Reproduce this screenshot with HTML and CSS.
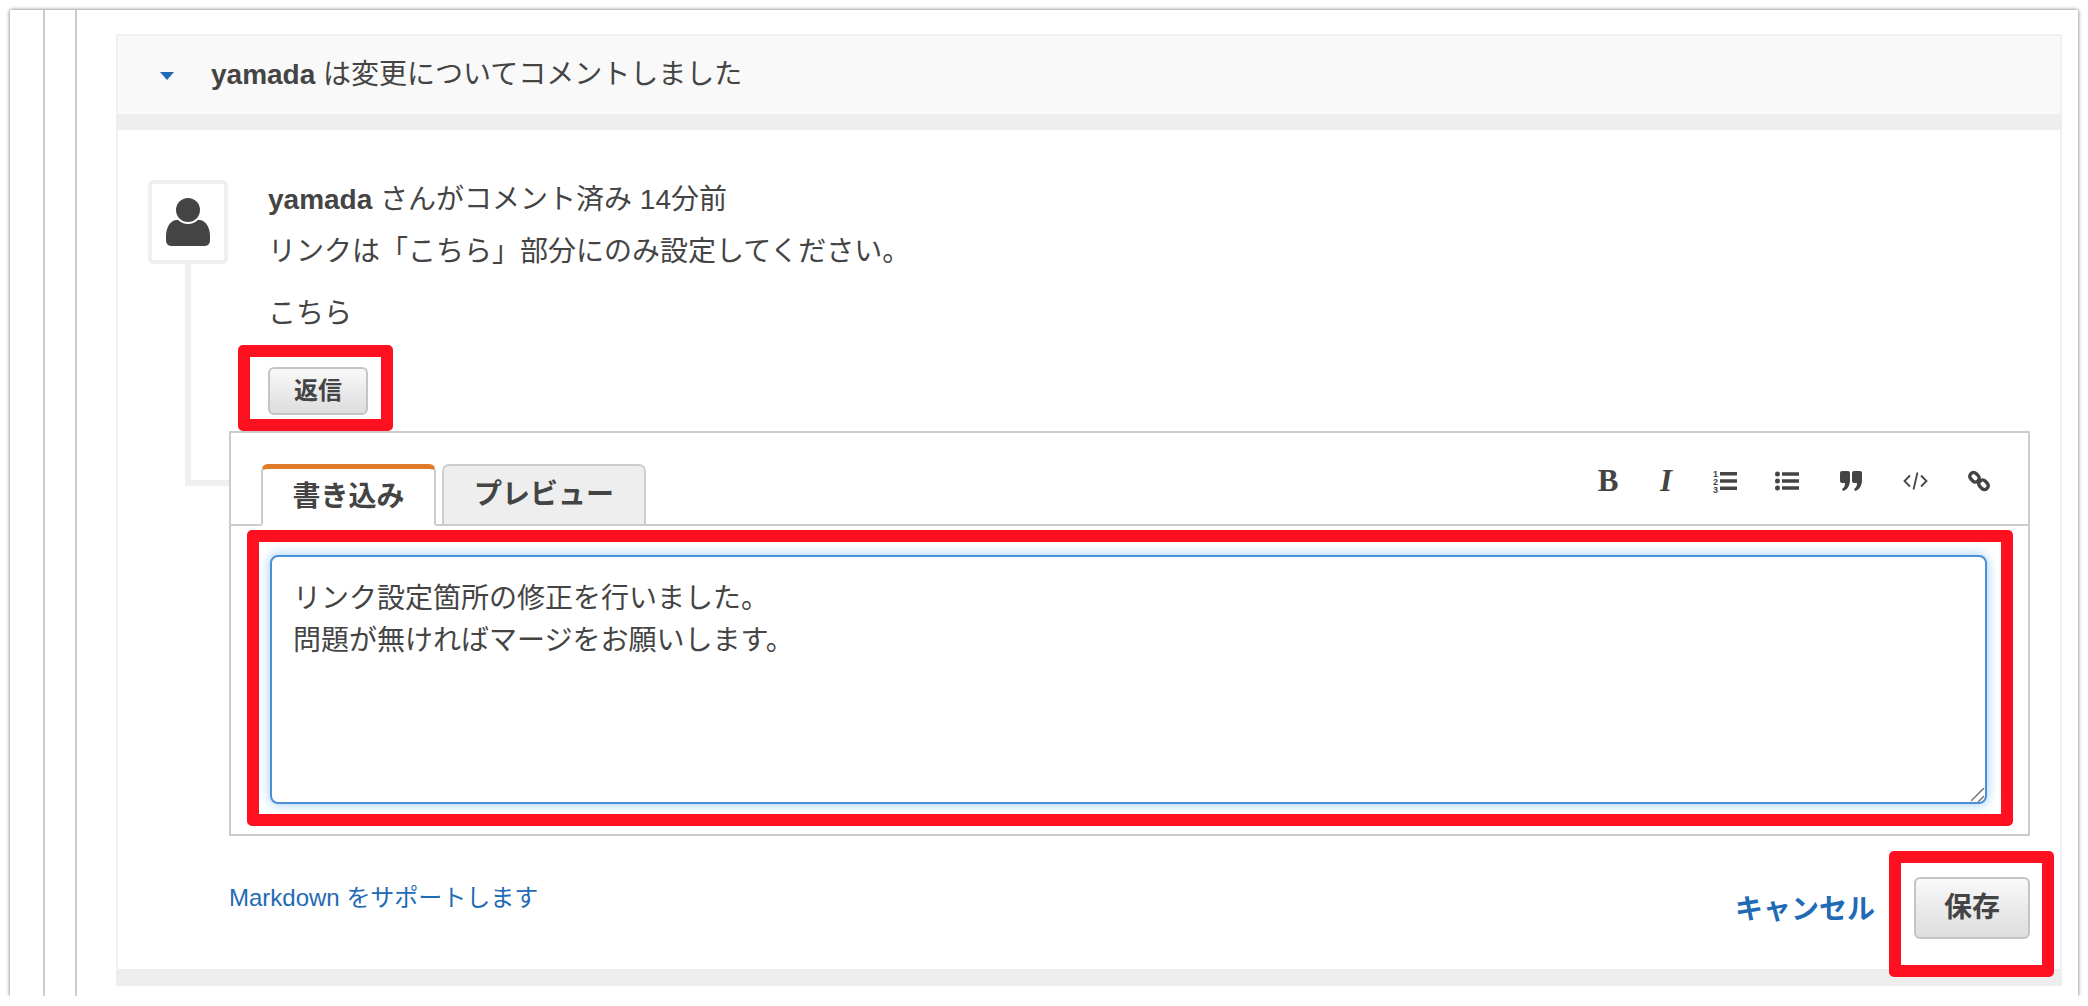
FILE: index.html
```html
<!DOCTYPE html>
<html lang="ja">

<head>
    <meta charset="UTF-8" />
    <title>yamada は変更についてコメントしました</title>
    <link rel="stylesheet" href="styles.css">
</head>

<body>
    <div class="card">
        <div class="rail">
            <div class="rail">
                <div class="panel">
                    <div class="panel-head">
                        <svg class="caret" width="14" height="8" viewBox="0 0 14 8"><path d="M0 0h14L7 8z" /></svg>
                        <h2><b>yamada</b> は変更についてコメントしました</h2>
                    </div>
                    <div class="band"></div>

                    <div class="panel-body">
                        <div class="connector"></div>
                        <div class="comment">
                            <div class="avatar">
                                <svg width="44" height="48" viewBox="0 0 44 48">
                                    <path class="dark" d="M11 22h22c7 0 11 8 11 16v4q0 6-6 6H6q-6 0-6-6v-4c0-8 4-16 11-16z" />
                                    <circle cx="22" cy="12" r="14" fill="#fff" />
                                    <circle class="dark" cx="22" cy="12" r="12" />
                                </svg>
                            </div>
                            <div class="comment-text">
                                <p class="meta"><b>yamada</b> さんがコメント済み 14分前</p>
                                <p class="line-one">リンクは「こちら」部分にのみ設定してください。</p>
                                <p class="line-two">こちら</p>
                                <button class="btn btn-small">返信</button>
                            </div>
                        </div>

                        <div class="editor">
                            <div class="editor-head">
                                <div class="tab tab-active">書き込み</div>
                                <div class="tab">プレビュー</div>
                                <div class="tools">
                                    <span class="tool tool-narrow tool-b">B</span>
                                    <span class="tool tool-narrow tool-i">I</span>
                                    <span class="tool tool-ol">
                                        <svg width="24" height="24" viewBox="0 0 24 24">
                                            <path class="dark" d="M7 3h17v3.500H7zM7 10.200h17v3.500H7zM7 17.500h17V21H7z" />
                                            <text x="0" y="7.500" class="num">1</text>
                                            <text x="0" y="15.500" class="num">2</text>
                                            <text x="0" y="23.500" class="num">3</text>
                                        </svg>
                                    </span>
                                    <span class="tool">
                                        <svg width="24" height="20" viewBox="0 0 24 20">
                                            <circle class="dark" cx="2.500" cy="3" r="2.500" />
                                            <circle class="dark" cx="2.500" cy="10" r="2.500" />
                                            <circle class="dark" cx="2.500" cy="17" r="2.500" />
                                            <path class="dark" d="M7 1.200h17v3.500H7zM7 8.200h17v3.500H7zM7 15.200h17v3.500H7z" />
                                        </svg>
                                    </span>
                                    <span class="tool">
                                        <svg width="22" height="20" viewBox="0 0 22 20">
                                            <path class="dark" d="M2 0h6q2 0 2 2v7c0 6-3 10-7 11l-1-2c2-1 3-3 3-6H2q-2 0-2-2V2q0-2 2-2zM14 0h6q2 0 2 2v7c0 6-3 10-7 11l-1-2c2-1 3-3 3-6h-3q-2 0-2-2V2q0-2 2-2z" />
                                        </svg>
                                    </span>
                                    <span class="tool">
                                        <svg width="25" height="18" viewBox="0 0 25 18">
                                            <path class="thin" d="M7 3.500 1.500 9 7 14.500M18 3.500 23.500 9 18 14.500M14.500 .5l-4 17" />
                                        </svg>
                                    </span>
                                    <span class="tool">
                                        <svg width="22" height="22" viewBox="0 0 22 22">
                                            <g class="chain">
                                                <rect x="1.500" y="3.500" width="10" height="7.500" rx="3.500" transform="rotate(45 6.500 7.200)" />
                                                <rect x="10.500" y="11" width="10" height="7.500" rx="3.500" transform="rotate(45 15.500 14.800)" />
                                            </g>
                                        </svg>
                                    </span>
                                </div>
                            </div>
                            <div class="editor-body">
                                <textarea class="comment-input">リンク設定箇所の修正を行いました。
問題が無ければマージをお願いします。</textarea>
                                <svg class="grip" width="14" height="14" viewBox="0 0 14 14">
                                    <path d="M0 13 13 0M7 14l6-6" />
                                </svg>
                            </div>
                        </div>

                        <div class="editor-foot">
                            <a class="md-link" href="#">Markdown をサポートします</a>
                            <div class="actions">
                                <a class="cancel" href="#">キャンセル</a>
                                <button class="btn btn-save">保存</button>
                            </div>
                        </div>
                    </div>
                    <div class="band band-bottom"></div>
                </div>
            </div>
        </div>

        <!-- 赤枠の注釈 -->
        <div class="mark mark-reply"></div>
        <div class="mark mark-input"></div>
        <div class="mark mark-save"></div>
    </div>
</body>

</html>
```

FILE: styles.css
```css
body {
    margin: 0;
    padding: 10px 10px 0;
    background: #fff;
    color: #444;
    font-family: "Liberation Sans", "Noto Sans CJK JP", sans-serif;
    font-size: 28px;
}

p {
    margin: 0;
}

.dark {
    fill: #444;
}

.card {
    position: relative;
    height: 986px;
    box-sizing: border-box;
    background: #fff;
    box-shadow: 0 0 4px rgba(0, 0, 0, 0.6);
    padding-left: 33px;
}

.rail {
    height: 100%;
    box-sizing: border-box;
    border-left: 2px solid #ccc;
    padding-left: 30px;
}

.rail .rail {
    padding: 24px 16px 0 39px;
}

.panel {
    border: 2px solid #f0f0f0;
    border-bottom: 0;
    background: #fff;
}

.panel-head {
    display: flex;
    align-items: center;
    height: 78px;
    background: #f9f9f9;
}

.caret {
    fill: #1f6bb5;
    margin: 2px 37px 0 42px;
}

.panel-head h2 {
    margin: 0 0 6px;
    font-size: 28px;
    font-weight: normal;
}

.band {
    height: 16px;
    background: #eee;
    margin: 0 -2px 0 -2px;
}

.band-bottom {
    height: 17px;
}

.panel-body {
    position: relative;
    padding: 50px 30px 30px;
}

.connector {
    position: absolute;
    left: 67px;
    top: 134px;
    width: 44px;
    height: 222px;
    box-sizing: border-box;
    border-left: 6px solid #f0f0f0;
    border-bottom: 6px solid #f0f0f0;
}

.comment {
    position: relative;
    display: flex;
    gap: 40px;
}

.avatar {
    display: flex;
    align-items: center;
    justify-content: center;
    width: 80px;
    height: 84px;
    box-sizing: border-box;
    background: #fff;
    border: 4px solid #f0f0f0;
    border-radius: 5px;
}

.comment-text {
    line-height: 42px;
}

.meta {
    margin-top: -1px;
}

.line-one {
    margin-top: 10px;
}

.line-two {
    margin-top: 20px;
}

.btn {
    display: block;
    padding: 0 0 6px;
    font-family: inherit;
    font-weight: bold;
    color: #444;
    background: linear-gradient(#f9f9f9, #ddd);
    border: 2px solid #c4c4c4;
    border-radius: 6px;
    cursor: pointer;
}

.btn-small {
    margin-top: 32px;
    width: 100px;
    height: 48px;
    font-size: 24px;
}

.btn-save {
    width: 116px;
    height: 62px;
    font-size: 28px;
}

.editor {
    position: relative;
    margin: 16px 0 0 81px;
    border: 2px solid #ccc;
    background: #fff;
}

.editor-head {
    display: flex;
    align-items: flex-end;
    gap: 6px;
    height: 93px;
    box-sizing: border-box;
    padding: 0 17px 0 30px;
    border-bottom: 2px solid #ccc;
}

.tab {
    display: flex;
    align-items: center;
    justify-content: center;
    width: 204px;
    height: 62px;
    box-sizing: border-box;
    margin-bottom: -2px;
    padding-bottom: 6px;
    font-weight: bold;
    background: #eee;
    border: 2px solid #ccc;
    border-radius: 7px 7px 0 0;
}

.tab-active {
    width: 175px;
    background: #fff;
    border-top: 5px solid #e07b2a;
    border-bottom-color: #fff;
}

.tools {
    display: flex;
    align-items: center;
    align-self: flex-start;
    height: 94px;
    margin-left: auto;
}

.tool {
    display: flex;
    align-items: center;
    justify-content: center;
    width: 64px;
    height: 30px;
    margin-top: 1px;
    font-family: "Liberation Serif", serif;
    font-size: 31px;
    font-weight: bold;
}

.tool-narrow {
    width: 58px;
}

.tool-ol {
    width: 60px;
}

.tool-i {
    font-style: italic;
}

.num {
    font-family: "Liberation Sans", sans-serif;
    font-size: 9px;
    font-weight: bold;
    fill: #444;
}

.thin {
    fill: none;
    stroke: #444;
    stroke-width: 1.800;
}

.chain {
    fill: none;
    stroke: #444;
    stroke-width: 3.400;
}

.editor-body {
    position: relative;
    padding: 29px 41px 30px 39px;
}

.comment-input {
    display: block;
    width: 100%;
    height: 249px;
    box-sizing: border-box;
    padding: 21px 21px;
    font-family: inherit;
    font-size: 28px;
    line-height: 42px;
    color: #444;
    border: 2px solid #4a90d9;
    border-radius: 8px;
    outline: none;
    resize: none;
    box-shadow: 0 0 12px rgba(82, 168, 236, 0.6);
}

.grip {
    position: absolute;
    right: 43px;
    bottom: 32px;
    fill: none;
    stroke: #777;
    stroke-width: 1.500;
}

.editor-foot {
    display: flex;
    justify-content: space-between;
    margin: 41px 0 0 81px;
}

.md-link {
    font-size: 24px;
    line-height: 42px;
    color: #1f6bb5;
    text-decoration: none;
}

.actions {
    display: flex;
    align-items: center;
    gap: 39px;
}

.cancel {
    margin-top: -2px;
    font-weight: bold;
    color: #1f6bb5;
    text-decoration: none;
}

/* 赤枠 */
.mark {
    position: absolute;
    box-sizing: border-box;
    border: 12px solid #ff1020;
    border-radius: 5px;
}

.mark-reply {
    left: 228px;
    top: 335px;
    width: 155px;
    height: 86px;
}

.mark-input {
    left: 237px;
    top: 520px;
    width: 1766px;
    height: 296px;
}

.mark-save {
    left: 1879px;
    top: 841px;
    width: 165px;
    height: 126px;
}
```
